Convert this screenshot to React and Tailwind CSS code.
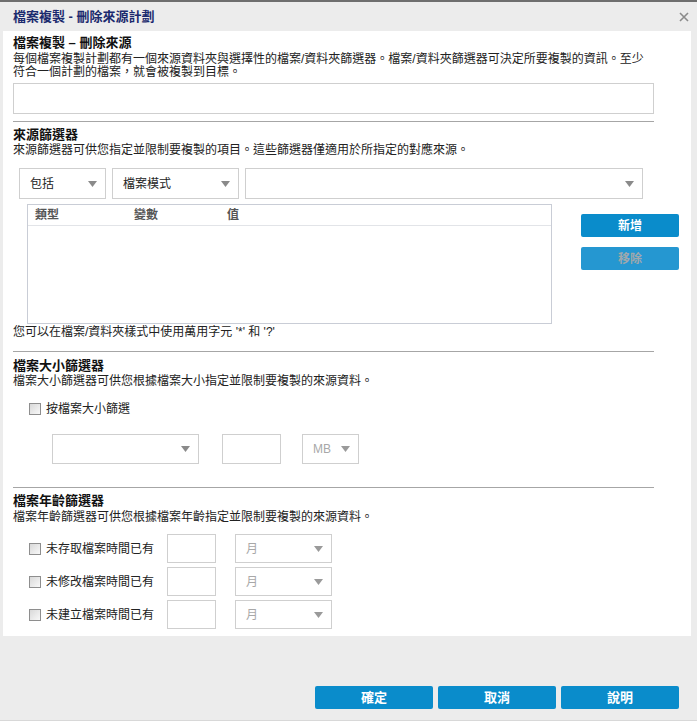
const FONT = "font-['Liberation_Sans','Noto_Sans_CJK_TC',sans-serif]";

function Arrow({ color = "#8a8a8a" }) {
  return (
    <svg width="9" height="6" viewBox="0 0 9 6" className="shrink-0">
      <path d="M0 0 L9 0 L4.5 6 Z" fill={color} />
    </svg>
  );
}

function Select({ className = "", value = "", muted = false, h = "h-[31px]" }) {
  return (
    <div
      className={`${h} border border-[#cfcfcf] bg-white flex items-center justify-between pl-[10px] pr-[8px] ${className}`}
    >
      <span className={`text-[12px] ${muted ? "text-[#a8a8a8]" : "text-[#222]"}`}>{value}</span>
      <Arrow color={muted ? "#9a9a9a" : "#8a8a8a"} />
    </div>
  );
}

function Checkbox() {
  return (
    <div className="w-[12px] h-[12px] border border-[#8e8e8e] bg-gradient-to-br from-[#d9d9d9] to-[#f8f8f8] shrink-0" />
  );
}

function Divider({ className = "" }) {
  return <div className={`h-px bg-[#a6a6a6] w-[641px] ${className}`} />;
}

function AgeRow({ label }) {
  return (
    <div className="flex items-center h-[29px]">
      <div className="ml-[16px] w-[138px] flex items-center gap-[5px]">
        <Checkbox />
        <span className="text-[12px] text-[#222] whitespace-nowrap">{label}</span>
      </div>
      <div className="w-[49px] h-[29px] border border-[#cfcfcf]" />
      <Select className="ml-[19px] w-[97px]" h="h-[29px]" value="月" muted />
    </div>
  );
}

export default function App() {
  return (
    <div className={`w-[697px] h-[721px] bg-[#ececec] border-t-2 border-[#6e6e6e] border-b border-b-[#d8d8d8] flex flex-col ${FONT}`}>
      {/* Header */}
      <div className="h-[29px] flex items-center justify-between pl-[13px] pr-[8px]">
        <span className="text-[13px] font-bold text-[#1b2a6e]">檔案複製 - 刪除來源計劃</span>
        <svg width="10" height="10" viewBox="0 0 10 10">
          <path d="M1 1 L9 9 M9 1 L1 9" stroke="#8a8a8a" strokeWidth="1.6" />
        </svg>
      </div>

      {/* Body */}
      <div className="ml-[3px] mr-[6px] h-[605px] bg-white pl-[10px] flex flex-col">
        <div className="mt-[4px] leading-[16px] text-[13px] font-bold text-[#111]">檔案複製 – 刪除來源</div>
        <div className="mt-[2px] text-[12px] leading-[13px] text-[#222] whitespace-nowrap">
          每個檔案複製計劃都有一個來源資料夾與選擇性的檔案/資料夾篩選器。檔案/資料夾篩選器可決定所要複製的資訊。至少
          <br />
          符合一個計劃的檔案，就會被複製到目標。
        </div>
        <div className="mt-[4px] w-[641px] h-[31px] border border-[#cfcfcf]" />
        <Divider className="mt-[7px]" />

        <div className="mt-[5px] leading-[16px] text-[13px] font-bold text-[#111]">來源篩選器</div>
        <div className="mt-[1px] text-[12px] leading-[13px] text-[#222]">
          來源篩選器可供您指定並限制要複製的項目。這些篩選器僅適用於所指定的對應來源。
        </div>
        <div className="mt-[11px] flex gap-[6px] ml-[6px]">
          <Select className="w-[87px]" value="包括" />
          <Select className="w-[127px]" value="檔案模式" />
          <Select className="w-[398px]" />
        </div>
        <div className="mt-[5px] flex">
          <div className="ml-[14px] w-[525px] h-[120px] border border-[#c9cdd6]">
            <div className="h-[21px] border-b border-[#e2e4e8] flex items-center text-[12px] font-bold text-[#555]">
              <span className="ml-[7px] w-[99px]">類型</span>
              <span className="w-[93px]">變數</span>
              <span>值</span>
            </div>
          </div>
          <div className="ml-[29px] mt-[10px] flex flex-col gap-[10px]">
            <button className="w-[98px] h-[23px] rounded-[2px] bg-[#0a8ccb] text-white text-[12px] font-bold">新增</button>
            <button className="w-[98px] h-[23px] rounded-[2px] bg-[#2597d1] text-[#9fa8ad] text-[12px] font-bold">移除</button>
          </div>
        </div>
        <div className="mt-[2px] text-[12px] leading-[13px] text-[#222]">您可以在檔案/資料夾樣式中使用萬用字元 '*' 和 '?'</div>
        <Divider className="mt-[12px]" />

        <div className="mt-[6px] leading-[16px] text-[13px] font-bold text-[#111]">檔案大小篩選器</div>
        <div className="mt-[1px] text-[12px] leading-[13px] text-[#222]">
          檔案大小篩選器可供您根據檔案大小指定並限制要複製的來源資料。
        </div>
        <div className="mt-[13px] h-[16px] ml-[16px] flex items-center gap-[5px]">
          <Checkbox />
          <span className="text-[12px] text-[#222]">按檔案大小篩選</span>
        </div>
        <div className="mt-[17px] ml-[39px] flex items-center">
          <Select className="w-[147px]" h="h-[30px]" />
          <div className="ml-[23px] w-[59px] h-[30px] border border-[#cfcfcf]" />
          <Select className="ml-[21px] w-[57px]" h="h-[30px]" value="MB" muted />
        </div>
        <Divider className="mt-[23px]" />

        <div className="mt-[5px] leading-[16px] text-[13px] font-bold text-[#111]">檔案年齡篩選器</div>
        <div className="mt-[2px] text-[12px] leading-[13px] text-[#222]">
          檔案年齡篩選器可供您根據檔案年齡指定並限制要複製的來源資料。
        </div>
        <div className="mt-[10px] flex flex-col gap-[4px]">
          <AgeRow label="未存取檔案時間已有" />
          <AgeRow label="未修改檔案時間已有" />
          <AgeRow label="未建立檔案時間已有" />
        </div>
      </div>

      {/* Footer */}
      <div className="mt-[50px] flex justify-end gap-[5px] pr-[18px]">
        <button className="w-[118px] h-[23px] rounded-[2px] bg-[#0a8ccb] text-white text-[13px] font-bold">確定</button>
        <button className="w-[118px] h-[23px] rounded-[2px] bg-[#0a8ccb] text-white text-[13px] font-bold">取消</button>
        <button className="w-[118px] h-[23px] rounded-[2px] bg-[#0a8ccb] text-white text-[13px] font-bold">說明</button>
      </div>
    </div>
  );
}
